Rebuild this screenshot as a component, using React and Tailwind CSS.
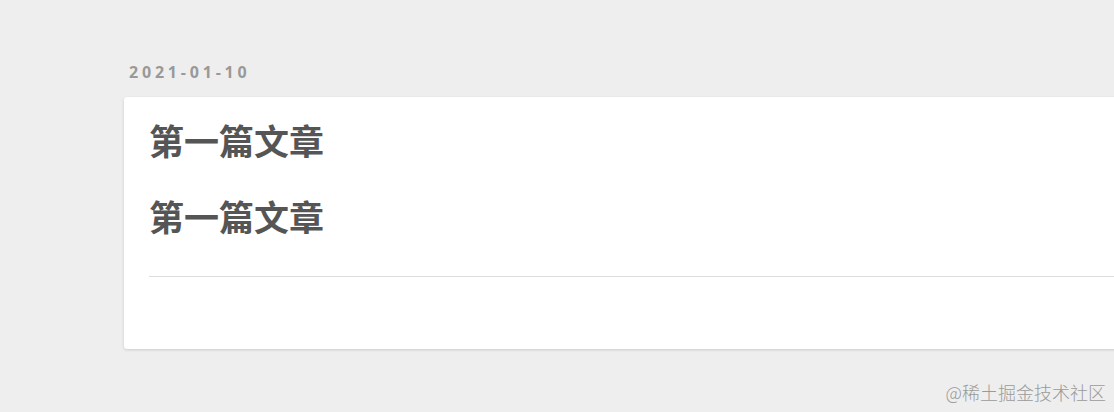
export default function App() {
  return (
    <div className="w-[1114px] h-[412px] bg-[#eeeeee] relative overflow-hidden" style={{ fontFamily: '"Open Sans", "Noto Sans CJK SC", sans-serif' }}>
      <div className="pt-[61px] pl-[124px]">
        <div className="pl-[5px] text-[16px] font-bold tracking-[3.8px] text-[#999999] leading-[22px]">2021-01-10</div>
        <div className="mt-[14px] w-[1100px] h-[252px] bg-white rounded-[3px] shadow-[0_1px_3px_rgba(0,0,0,0.15)] px-[25px] pt-[20px]">
          <h1 className="text-[35px] font-bold text-[#555555] leading-[50px]">第一篇文章</h1>
          <h1 className="mt-[26px] text-[35px] font-bold text-[#555555] leading-[50px]">第一篇文章</h1>
          <div className="mt-[33px] border-t border-[#dddddd]"></div>
        </div>
      </div>
      <div className="absolute right-[8px] bottom-[6px] text-[18px] text-[#9a9a9a]" style={{ fontFamily: '"Noto Sans CJK SC", sans-serif', fontWeight: 300 }}>@稀土掘金技术社区</div>
    </div>
  );
}
